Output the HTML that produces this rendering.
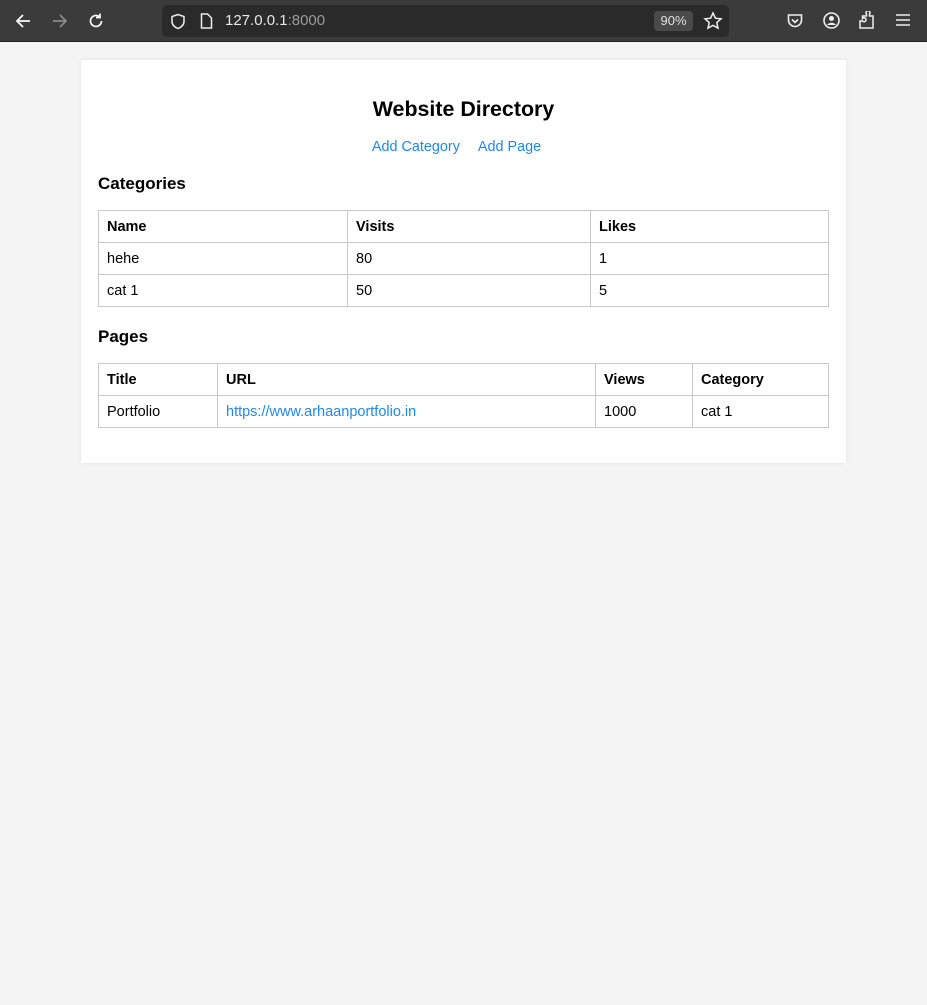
<!DOCTYPE html>
<html><head><meta charset="utf-8"><style>
*{box-sizing:border-box;margin:0;padding:0}
body{width:927px;height:1005px;background:#f4f4f4;font-family:"Liberation Sans",Arial,sans-serif;overflow:hidden;position:relative}
.bar{position:absolute;left:0;top:0;width:927px;height:42px;background:#3b3b3b;border-bottom:1px solid #1e1e1e}
.url{position:absolute;left:162px;top:5px;width:567px;height:32px;background:#2a2a2a;border-radius:5px}
.url .t{position:absolute;left:63px;top:7px;color:#e8e8e8;font-size:15px}
.url .t span{color:#9a9a9a}
.zoom{position:absolute;left:492px;top:6px;width:39px;height:20px;background:#4a4a4a;border-radius:4px;color:#e0e0e0;font-size:13px;text-align:center;line-height:20px}
svg{position:absolute}
.card{position:absolute;left:81px;top:60px;width:765px;height:403px;background:#fff;box-shadow:0 0 4px rgba(0,0,0,.08)}
h1{position:absolute;left:0;width:765px;top:37px;text-align:center;font-size:21.4px;font-weight:bold;color:#000}
.links{position:absolute;left:0;width:765px;top:79px;text-align:center;font-size:14.4px;padding-right:14px}
.links a{color:#1e88f5;text-decoration:none;margin:0 7px}
h2{position:absolute;left:17px;font-size:17px;font-weight:bold}
table{position:absolute;left:17px;width:731px;border-collapse:collapse;font-size:14.5px}
td,th{border:1px solid #c8c8c8;height:32px;padding:1px 8px 0;text-align:left;color:#000}
th{font-weight:bold}
td a{color:#1e88f5;text-decoration:none}
</style></head><body>
<div class="bar">
<svg style="left:14px;top:12px" width="18" height="18" viewBox="0 0 18 18"><path d="M16 9H3M9 3L3 9l6 6" stroke="#fbfbfb" stroke-width="1.8" fill="none"/></svg>
<svg style="left:51px;top:12px" width="18" height="18" viewBox="0 0 18 18"><path d="M2 9h13M9 3l6 6-6 6" stroke="#8a8a8a" stroke-width="1.8" fill="none"/></svg>
<svg style="left:87px;top:12px" width="18" height="18" viewBox="0 0 18 18"><path d="M14.5 9A5.5 5.5 0 1 1 12.5 4.7M13 1.5v4h-4" stroke="#fbfbfb" stroke-width="1.7" fill="none"/></svg>
<div class="url">
<svg style="left:8px;top:8px" width="16" height="17" viewBox="0 0 16 17"><path d="M8 1.5L2 3.5v5c0 3.5 3 6 6 7 3-1 6-3.5 6-7v-5z" stroke="#eee" stroke-width="1.5" fill="none"/></svg>
<svg style="left:38px;top:8px" width="13" height="16" viewBox="0 0 13 16"><path d="M1.5 1h6l4 4v10h-10z" stroke="#eee" stroke-width="1.5" fill="none"/></svg>
<div class="t">127.0.0.1<span>:8000</span></div>
<div class="zoom">90%</div>
<svg style="left:541px;top:6px" width="20" height="20" viewBox="0 0 20 20"><path d="M10 2l2.4 5.2 5.6.6-4.2 3.8 1.2 5.6L10 14.4 5 17.2l1.2-5.6L2 7.8l5.6-.6z" stroke="#eee" stroke-width="1.5" fill="none"/></svg>
</div>
<svg style="left:786px;top:12px" width="18" height="18" viewBox="0 0 18 18"><path d="M2.5 3h13v5a6.5 6.5 0 0 1-13 0z" stroke="#eee" stroke-width="1.6" fill="none"/><path d="M6 7.5l3 3 3-3" stroke="#eee" stroke-width="1.6" fill="none"/></svg>
<svg style="left:822px;top:11px" width="19" height="19" viewBox="0 0 19 19"><circle cx="9.5" cy="9.5" r="7.5" stroke="#eee" stroke-width="1.6" fill="none"/><circle cx="9.5" cy="7.5" r="2.5" fill="#eee"/><path d="M5 14c2-3 7-3 9 0" fill="#eee"/></svg>
<svg style="left:858px;top:11px" width="18" height="19" viewBox="0 0 18 19"><path d="M2 17V10h2.5a2 2 0 1 0 0-2.5V5h4V3a2 2 0 1 1 3 0v2h3.5v12z" stroke="#eee" stroke-width="1.5" fill="none"/></svg>
<svg style="left:895px;top:13px" width="16" height="14" viewBox="0 0 16 14"><path d="M1 2h14M1 7h14M1 12h14" stroke="#eee" stroke-width="1.6"/></svg>
</div>
<div class="card">
<h1>Website Directory</h1>
<div class="links"><a>Add Category</a> <a>Add Page</a></div>
<h2 style="top:114px">Categories</h2>
<table style="top:150px">
<colgroup><col style="width:249px"><col style="width:243px"><col></colgroup>
<tr><th>Name</th><th>Visits</th><th>Likes</th></tr>
<tr><td>hehe</td><td>80</td><td>1</td></tr>
<tr><td>cat 1</td><td>50</td><td>5</td></tr>
</table>
<h2 style="top:267px">Pages</h2>
<table style="top:303px">
<colgroup><col style="width:119px"><col style="width:378px"><col style="width:97px"><col></colgroup>
<tr><th>Title</th><th>URL</th><th>Views</th><th>Category</th></tr>
<tr><td>Portfolio</td><td><a>https://www.arhaanportfolio.in</a></td><td>1000</td><td>cat 1</td></tr>
</table>
</div>
</body></html>
